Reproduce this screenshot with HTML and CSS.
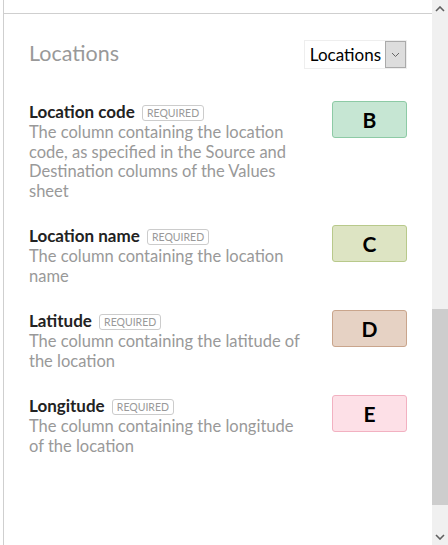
FILE: index.html
```html
<!DOCTYPE html>
<html lang="en">
<head>
    <meta charset="UTF-8">
    <meta name="viewport" content="width=device-width, initial-scale=1.0">
    <title>Locations</title>
    <link rel="stylesheet" href="styles.css">
</head>
<body>
    <div class="frame">
        <div class="panel">
            <div class="sheet">
                <div class="sheet-head">
                    <h2 class="sheet-title">Locations</h2>
                    <div class="picker">
                        <span class="picker-value">Locations</span>
                        <span class="picker-btn">
                            <svg width="9" height="6" viewBox="0 0 9 6"><polyline points="1,1 4.5,4.5 8,1" fill="none" stroke="#666" stroke-width="1"/></svg>
                        </span>
                    </div>
                </div>

                <div class="field">
                    <div class="field-text">
                        <div class="field-name">Location code <span class="badge">Required</span></div>
                        <div class="field-desc">The column containing the location code, as specified in the Source and Destination columns of the Values sheet</div>
                    </div>
                    <div class="chip chip-b">B</div>
                </div>

                <div class="field">
                    <div class="field-text">
                        <div class="field-name">Location name <span class="badge">Required</span></div>
                        <div class="field-desc">The column containing the location name</div>
                    </div>
                    <div class="chip chip-c">C</div>
                </div>

                <div class="field">
                    <div class="field-text">
                        <div class="field-name">Latitude <span class="badge">Required</span></div>
                        <div class="field-desc">The column containing the latitude of the location</div>
                    </div>
                    <div class="chip chip-d">D</div>
                </div>

                <div class="field">
                    <div class="field-text">
                        <div class="field-name">Longitude <span class="badge">Required</span></div>
                        <div class="field-desc">The column containing the longitude of the location</div>
                    </div>
                    <div class="chip chip-e">E</div>
                </div>
            </div>
        </div>

        <!-- fake scrollbar -->
        <div class="scrollbar">
            <div class="scroll-arrow">
                <svg width="10" height="6" viewBox="0 0 10 6"><polyline points="1,5 5,1 9,5" fill="none" stroke="#606060" stroke-width="1.6"/></svg>
            </div>
            <div class="scroll-track">
                <div class="scroll-thumb"></div>
            </div>
            <div class="scroll-arrow">
                <svg width="10" height="6" viewBox="0 0 10 6"><polyline points="1,1 5,5 9,1" fill="none" stroke="#606060" stroke-width="1.6"/></svg>
            </div>
        </div>
    </div>
</body>
</html>
```

FILE: styles.css
```css
html, body {
    margin: 0;
    height: 100%;
    background-color: white;
}
body {
    font-family: Lato, 'Noto Sans', sans-serif;
    color: #222;
}
.frame {
    display: flex;
    height: 100%;
}
.panel {
    flex: 1;
    margin-left: 3px;
    border-left: 1px solid #cfcfcf;
    padding-top: 13px;
}
.sheet {
    border-top: 1px solid #cfcfcf;
    padding: 0 25px 0 25px;
}
.sheet-head {
    display: flex;
    justify-content: space-between;
    align-items: flex-start;
    padding-top: 26px;
    margin-bottom: 32px;
}
.sheet-title {
    margin: 0;
    font-size: 21.5px;
    line-height: 26px;
    font-weight: normal;
    color: #999;
}
.picker {
    display: flex;
    align-items: center;
    border: 1px solid #eee;
    height: 27px;
    padding-left: 5px;
}
.picker-value {
    font-size: 17px;
    color: #000;
    padding-right: 4px;
}
.picker-btn {
    display: flex;
    align-items: center;
    justify-content: center;
    width: 19px;
    height: 25px;
    background-color: #ddd;
    border: 1px solid #aaa;
}
.field {
    display: flex;
    justify-content: space-between;
    align-items: flex-start;
    margin-bottom: 24px;
}
.field-text {
    width: 276px;
}
.field-name {
    font-weight: bold;
    font-size: 17px;
    line-height: 22px;
}
.badge {
    display: inline-block;
    margin-left: 3px;
    padding: 0 4px;
    border: 1px solid #ccc;
    border-radius: 3px;
    font-size: 10.5px;
    line-height: 14px;
    font-weight: normal;
    text-transform: uppercase;
    color: #999;
    vertical-align: 1px;
}
.field-desc {
    font-size: 16.5px;
    line-height: 19.5px;
    color: #999;
}
.chip {
    width: 73px;
    height: 35px;
    border: 1px solid;
    border-radius: 3px;
    display: flex;
    align-items: center;
    justify-content: center;
    font-weight: bold;
    font-size: 21px;
    color: #000;
}
.chip-b {
    background-color: #c6e6d3;
    border-color: #8dcaa5;
}
.chip-c {
    background-color: #dde4c3;
    border-color: #b8c98b;
}
.chip-d {
    background-color: #e6d2c4;
    border-color: #c9a58c;
}
.chip-e {
    background-color: #fde0e7;
    border-color: #f2b1c1;
}
.scrollbar {
    width: 16px;
    display: flex;
    flex-direction: column;
    background-color: #f0f0f0;
}
.scroll-arrow {
    height: 17px;
    display: flex;
    align-items: center;
    justify-content: center;
}
.scroll-track {
    flex: 1;
}
.scroll-thumb {
    margin-top: 292px;
    height: 196px;
    background-color: #cdcdcd;
}
```
